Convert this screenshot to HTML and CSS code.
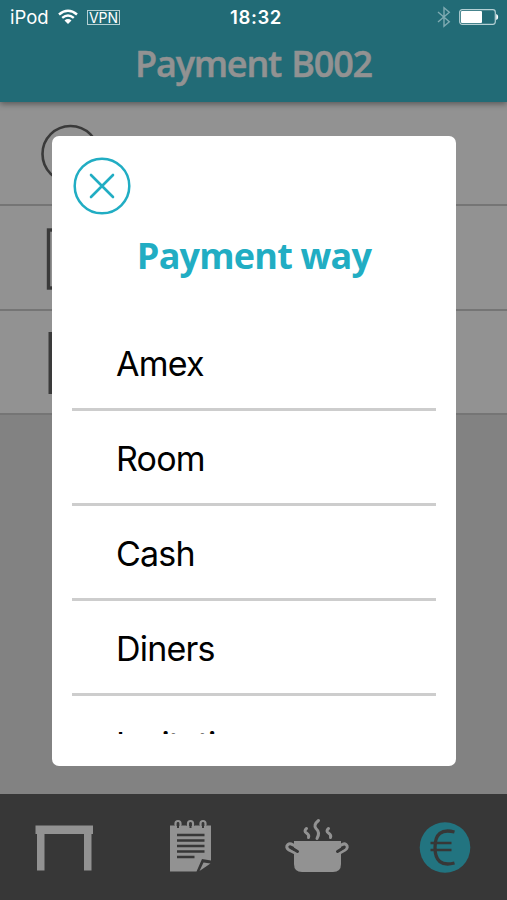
FILE: index.html
```html
<!DOCTYPE html>
<html lang="en">
<head>
  <meta charset="UTF-8" />
  <title>Payment B002</title>
  <link rel="stylesheet" href="styles.css">
</head>
<body>

<header class="header">
  <div class="status">
    <div class="status-left">
      <span class="device">iPod</span>
      <svg class="wifi" width="20" height="16" viewBox="0 0 20 16" fill="none" stroke="#fff" stroke-width="2.5">
        <path d="M1 5.5Q10 -2 19 5.5M4.2 8.9Q10 4.2 15.8 8.9"/>
        <path d="M6.5 11.4Q10 8.7 13.5 11.4L10 15Z" fill="#fff" stroke="none"/>
      </svg>
      <span class="vpn">VPN</span>
    </div>
    <span class="clock">18:32</span>
    <div class="status-right">
      <svg width="14" height="22" viewBox="0 0 14 22" fill="none" stroke="#7fabb2" stroke-width="1.4">
        <path d="M1 6L12.3 15.8L7 20.3V1.7L12.3 6.2L1 16"/>
      </svg>
      <svg width="40" height="16" viewBox="0 0 40 16">
        <rect x=".7" y=".7" width="35.6" height="14.6" rx="2.5" fill="none" stroke="#b5d0d4" stroke-width="1.2"/>
        <rect x="2" y="2" width="21" height="12" rx="1" fill="#fff"/>
        <path d="M37.2 5Q39.2 5.5 39.2 8T37.2 11Z" fill="#fff"/>
      </svg>
    </div>
  </div>
  <h1 class="title">Payment <span class="table-no">B002</span></h1>
</header>

<main class="content">
  <div class="row">
    <svg width="60" height="62" viewBox="0 0 60 62" fill="none" stroke="#3a3a3a" stroke-width="2.6">
      <circle cx="29.5" cy="31" r="28"/>
    </svg>
  </div>
  <div class="row">
    <svg width="60" height="62" viewBox="0 0 60 62" fill="none" stroke="#3a3a3a" stroke-width="3.4">
      <rect x="7.5" y="2" width="46" height="58"/>
    </svg>
  </div>
  <div class="row">
    <svg width="60" height="62" viewBox="0 0 60 62" fill="#3a3a3a">
      <rect x="7.5" y="0" width="46" height="62"/>
    </svg>
  </div>
</main>

<nav class="tabs">
  <a class="tab">
    <svg width="60" height="60" viewBox="0 0 60 60" fill="#929292">
      <path d="M1.5 8.5H59V17H57.5V53.5H50V17H10.5V53.5H3V17H1.5Z"/>
    </svg>
  </a>
  <a class="tab">
    <svg width="60" height="60" viewBox="0 0 60 60">
      <path d="M10 8.5H51V43.5L42 42L36.5 54.5H10Z" fill="#929292"/>
      <path d="M39.5 54L43.5 45.5L50.5 46.5Z" fill="#929292"/>
      <path d="M14 3H22V9H14ZM26.5 3H34.5V9H26.5ZM39 3H47V9H39Z" fill="#373737"/>
      <path d="M15.5 11V6.5A2.5 2.5 0 0 1 20.5 6.5V11M28 11V6.5A2.5 2.5 0 0 1 33 6.5V11M40.5 11V6.5A2.5 2.5 0 0 1 45.5 6.5V11" fill="none" stroke="#929292" stroke-width="2.2"/>
      <path d="M18 6V11M30.5 6V11M43 6V11" stroke="#373737" stroke-width="2"/>
      <path d="M17 18H44.5M17 23.5H44.5M17 29H44.5M17 34.5H44.5M17 40H34.5" stroke="#373737" stroke-width="2.6"/>
    </svg>
  </a>
  <a class="tab">
    <svg width="66" height="60" viewBox="0 0 66 60" fill="none" stroke="#929292" stroke-linecap="round">
      <path d="M10 24H57V47Q57 55 49 55H18Q10 55 10 47Z" fill="#929292" stroke="none"/>
      <path d="M13 37L5 33Q1 30 4 27.5Q6 26 9 28L14 30" stroke-width="3"/>
      <path d="M54 37L61 33Q65 30 62 27.5Q60 26 57.5 28L52.5 30" stroke-width="3"/>
      <path d="M7 30.5L13.5 34.5M60 30.5L53.5 34.5" stroke="#373737" stroke-width="3"/>
      <path d="M22.5 11.5Q19.5 14 22.5 16T24.5 20.5M44.5 11.5Q41.5 14 44.5 16T46.5 20.5M34.5 3.5Q29 8 32 11.5Q36.5 15.5 33 21.5" stroke-width="3"/>
    </svg>
  </a>
  <a class="tab tab-active">
    <svg width="60" height="60" viewBox="0 0 60 60" fill="none" stroke="#373737" stroke-width="3.3">
      <circle cx="32" cy="30.5" r="25.3" fill="#227480" stroke="none"/>
      <path d="M41.5 15Q22 10 22 30.5Q22 51 41.5 46"/>
      <path d="M17.5 26H38.5M17.5 33H38.5" stroke-width="2.7"/>
    </svg>
  </a>
</nav>

<div class="modal">
  <button class="close">
    <svg width="58" height="58" viewBox="0 0 58 58" fill="none" stroke="#21adc3" stroke-linecap="round">
      <circle cx="29" cy="29" r="27.3" stroke-width="2.5"/>
      <path d="M18 18L40 40M40 18L18 40" stroke-width="2.6"/>
    </svg>
  </button>
  <h2 class="modal-title">Payment way</h2>
  <ul class="ways">
    <li>Amex</li>
    <li>Room</li>
    <li>Cash</li>
    <li>Diners</li>
    <li>Invitation</li>
  </ul>
</div>

</body>
</html>
```

FILE: styles.css
```css
* {
  box-sizing: border-box;
}
body {
  margin: 0;
  width: 507px;
  height: 900px;
  display: flex;
  flex-direction: column;
  position: relative;
  overflow: hidden;
  background: #828282;
  font-family: Inter, "Liberation Sans", sans-serif;
}
h1, h2, ul {
  margin: 0;
  padding: 0;
}
svg {
  display: block;
}

/* header */
.header {
  height: 102px;
  flex: none;
  background: #226b76;
  box-shadow: 0 2px 6px rgba(0, 0, 0, .4);
  z-index: 1;
}
.status {
  height: 34px;
  padding: 0 8px 0 10px;
  display: grid;
  grid-template-columns: 1fr auto 1fr;
  align-items: center;
  color: #fff;
}
.status-left, .status-right {
  display: flex;
  align-items: center;
}
.status-right {
  justify-content: flex-end;
  gap: 8px;
}
.device {
  font-size: 18.5px;
  width: 48px;
}
.vpn {
  margin-left: 9px;
  width: 33px;
  height: 15px;
  border: 1px solid #b5d0d4;
  font-size: 14px;
  line-height: 13px;
  text-align: center;
}
.clock {
  padding-left: 3px;
  font-size: 18.5px;
  font-weight: 600;
  letter-spacing: .6px;
}
.title {
  line-height: 60px;
  text-align: center;
  color: #929292;
}
.title, .modal-title {
  font-family: "Open Sans", sans-serif;
  font-size: 36px;
  font-weight: 700;
  letter-spacing: -.8px;
}
.title {
  font-weight: 600;
  letter-spacing: -1.2px;
  word-spacing: 2px;
  -webkit-text-stroke: .5px #929292;
}
.table-no {
  letter-spacing: -1.2px;
}

/* page behind the dialog */
.content {
  flex: 1;
}
.row {
  height: 104.4px;
  padding: 2px 0 0 41px;
  display: flex;
  align-items: center;
  background: #929292;
  border-bottom: 2px solid #757575;
}

/* tab bar */
.tabs {
  height: 106px;
  flex: none;
  padding: 0 1px;
  display: grid;
  grid-template-columns: repeat(4, 1fr);
  align-items: center;
  justify-items: center;
  background: #373737;
}

/* dialog */
.modal {
  position: absolute;
  left: 52px;
  top: 136px;
  width: 404px;
  height: 630px;
  padding: 21px 20px 32px;
  display: flex;
  flex-direction: column;
  background: #fff;
  border-radius: 7px;
  z-index: 2;
}
.close {
  align-self: flex-start;
  margin-left: 1px;
  padding: 0;
  border: 0;
  background: none;
}
.modal-title {
  margin-top: 11px;
  margin-bottom: 1px;
  line-height: 60px;
  text-align: center;
  color: #21adc3;
}
.ways {
  margin-top: 29px;
  flex: 1;
  min-height: 0;
  overflow: hidden;
  list-style: none;
}
.ways li {
  height: 95px;
  padding-left: 44px;
  border-bottom: 3px solid #cdcdcd;
  line-height: 96px;
  font-size: 34px;
  letter-spacing: -.8px;
  color: #000;
}
.ways li:last-child {
  line-height: 98px;
}
```
